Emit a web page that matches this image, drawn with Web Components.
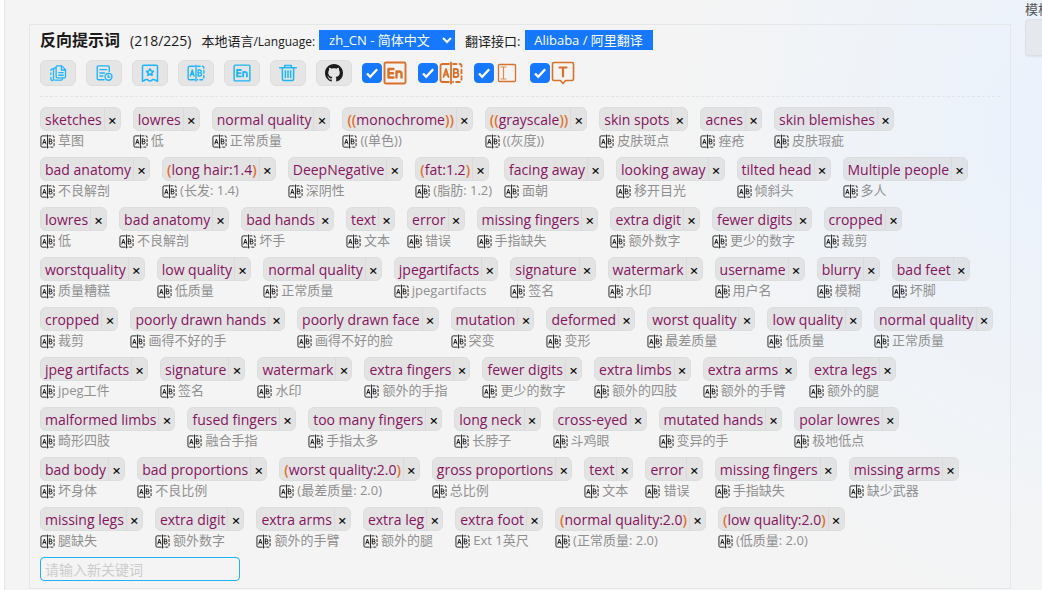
<!DOCTYPE html>
<html lang="zh-CN">
<head>
<meta charset="utf-8">
<title>反向提示词</title>
<style>
  body { margin: 0; overflow: hidden; font-family: "Open Sans", "Noto Sans CJK SC", sans-serif; color: #1a1a1a; }
</style>
</head>
<body>
<prompt-app></prompt-app>

<template id="app-template">
  <style>
    :host { display: grid; grid-template-columns: minmax(0, 1fr) 17px; column-gap: 14px; box-sizing: border-box;
      min-height: 100vh; margin-left: 4px; padding-left: 24px; border-left: 1px solid #e6e6e6;
      background: radial-gradient(ellipse 36% 85% at 100% 22%, #ebf2fc, #eff3f8 50%, #f4f4f4) #f4f4f4; }
    main { padding-top: 24px; }
    aside { overflow: hidden; white-space: nowrap; font-size: 13px; line-height: 19px; color: #555; }
    aside label { display: block; }
    aside input { box-sizing: border-box; width: 200px; height: 37px; border: 1px solid #dcdfe4; border-radius: 4px;
      background: #e5e8ed; display: block; box-shadow: 0 1px 2px #0001; }
  </style>
  <main><prompt-panel></prompt-panel></main>
  <aside><label for="model">模板</label><input id="model" type="text"></aside>
</template>

<template id="panel-template">
  <style>
    :host { display: block; box-sizing: border-box; border: 1px solid #e5e7e9; padding: 5px 10px 7px; }
    header { display: flex; align-items: center; height: 20px; white-space: nowrap; font-size: 13px; }
    h1 { margin: 0 10px 0 0; font-size: 16px; line-height: 20px; font-weight: 700; }
    .count { font-size: 14px; margin-right: 10px; }
    label { margin-right: 4px; }
    label small { font-size: 12px; }
    .pick { display: grid; position: relative; margin-right: 10px; }
    select, .api { appearance: none; box-sizing: border-box; height: 20px; border: 0; border-radius: 0; margin: 0;
      background: #1677ff; color: #fff; font: inherit; line-height: 20px; }
    select { width: 136px; padding: 0 24px 0 10px; }
    .api { width: 128px; padding: 0; text-align: center; }
    .pick svg { position: absolute; right: 3px; top: 5px; width: 10px; height: 10px; pointer-events: none; }
    tool-bar { margin-top: 10px; padding-bottom: 10px; border-bottom: 1px dashed #e3e4e6; }
    .tags { display: grid; row-gap: 8px; margin-top: 10px; }
    .group { display: flex; flex-wrap: wrap; gap: 8px 12px; }
    .new { box-sizing: border-box; display: block; width: 200px; height: 24px; margin-top: 8px; padding: 0 4px;
      border: 1px solid #1db1f5; border-radius: 4px; background: transparent; font: inherit; font-size: 14px; outline: 0; }
    .new::placeholder { color: #ccc; opacity: 1; }
  </style>
  <header>
    <h1>反向提示词</h1>
    <span class="count">(218/225)</span>
    <label for="lang">本地语言<small>/Language:</small></label>
    <span class="pick">
      <select id="lang"><option>zh_CN - 简体中文</option></select>
      <svg viewBox="0 0 10 10" fill="none" stroke="#fff" stroke-width="2"><path d="M1 3l4 4 4-4"/></svg>
    </span>
    <label for="api">翻译接口:</label>
    <button class="api" id="api" type="button">Alibaba / 阿里翻译</button>
  </header>
  <tool-bar></tool-bar>
  <div class="tags"></div>
  <input class="new" type="text" placeholder="请输入新关键词" aria-label="请输入新关键词">
</template>

<template id="bar-template">
  <style>
    :host { display: flex; align-items: center; height: 26px; gap: 10px; }
  </style>
  <tool-button icon="copy" name="复制"></tool-button>
  <tool-button icon="history" name="历史"></tool-button>
  <tool-button icon="favorite" name="收藏"></tool-button>
  <tool-button icon="translate" name="翻译"></tool-button>
  <tool-button icon="english" name="英文"></tool-button>
  <tool-button icon="trash" name="删除"></tool-button>
  <tool-button icon="github" name="GitHub"></tool-button>
  <tool-toggle icon="english" name="自动英文"></tool-toggle>
  <tool-toggle icon="translate" name="自动翻译"></tool-toggle>
  <tool-toggle icon="cursor" name="输入框"></tool-toggle>
  <tool-toggle icon="tooltip" name="提示"></tool-toggle>
</template>

<template id="button-template">
  <style>
    :host { display: block; }
    button { display: grid; place-items: center; box-sizing: border-box; width: 36px; height: 26px; padding: 0;
      border: 1px solid #dedede; border-radius: 6px; background: #e5e5e5; color: #1eb4fa; }
    svg { width: 18px; height: 18px; display: block; }
    :host([icon="github"]) { color: #1c1c1c; }
    :host([icon="github"]) button { color: inherit; }
  </style>
  <button type="button"></button>
</template>

<template id="toggle-template">
  <style>
    :host { display: block; width: 46px; color: #d9712b; }
    label { display: flex; align-items: center; gap: 2px; }
    input { appearance: none; margin: 0; flex: none; width: 20px; height: 20px; border-radius: 4px; border: 1px solid #1677ff; }
    input:checked { background: #1677ff url("data:image/svg+xml,%3Csvg xmlns='http://www.w3.org/2000/svg' viewBox='0 0 18 18' fill='none' stroke='white' stroke-width='2.4'%3E%3Cpath d='M4 9.5l3.2 3.3 7-7.6'/%3E%3C/svg%3E"); }
    svg { display: block; width: 24px; height: 24px; margin: 0 -1px; }
  </style>
  <label><input type="checkbox" checked></label>
</template>

<template id="tag-template">
  <style>
    :host { display: block; white-space: nowrap; }
    .chip { display: flex; box-sizing: border-box; width: max-content; height: 24px; border: 1px solid #dcdddf;
      border-radius: 6px; background: rgba(200, 200, 200, .38); }
    .text { padding: 0 2px 0 4px; font-size: 14px; line-height: 24px; color: #86145f; }
    .text b { font-weight: 600; color: #e0702a; }
    button { width: 16px; padding: 0; border: 0; border-left: 1px solid #dadada; background: none; color: #111;
      font: 600 15px/25px "Open Sans", sans-serif; }
    .local { display: flex; align-items: center; gap: 3px; height: 18px; font-size: 13px; line-height: 18px; color: #909090; }
    svg { width: 15px; height: 15px; color: #111; margin-top: 3px; stroke-width: 1.4; }
  </style>
  <div class="chip"><span class="text"></span><button type="button" aria-label="删除">×</button></div>
  <div class="local"><slot></slot></div>
</template>

<script>
  const stroke = (body, width = 1.5) =>
    `<svg viewBox="0 0 24 24" fill="none" stroke="currentColor" stroke-width="${width}" stroke-linecap="round" stroke-linejoin="round" aria-hidden="true">${body}</svg>`;
  const letterA = '<path d="M4.500 16L7 8l2.500 8M5.300 13.600h3.400"/>';
  const letterB = '<path d="M14.800 8v8h2.400q2.200 0 2.200-2.200 0-1.800-1.800-2 1.400-.4 1.400-1.800 0-2-2-2zM14.800 11.800h2.600"/>';
  const icons = {
    copy: stroke('<path d="M11 2.500h6l5 5V17q0 1.500-1.500 1.500H11Q9.500 18.500 9.500 17V4Q9.500 2.500 11 2.500zM16.500 2.500V8h5M13 11.500h6M13 15h6M9 5Q6 5 6 7v12.500q0 2 2 2h8q2 0 2-2M5 6.500Q2.500 6.500 2.500 8.500M2.500 12v2M2.500 18v1.500q0 2.500 2.500 2.500"/>', 1.700),
    history: stroke('<path d="M19 10V4q0-1.500-1.500-1.500H4.500Q3 2.500 3 4v15.500Q3 21 4.500 21H12M6.500 7.500h9M6.500 12h6M6.500 16h4"/><circle cx="18" cy="17" r="4.600"/><path d="M17.500 14.500V17.500H20"/>', 1.800),
    favorite: stroke('<path d="M2 23V3q0-1.500 1.500-1.500h17Q22 1.500 22 3v20l-4-2-2-.5q-2 2-4 2t-4-2L6 21z"/><path d="M12 6.500l1.500 2.800 3.100.5-2.200 2.200.5 3.100-2.900-1.400-2.900 1.400.5-3.100-2.200-2.200 3.100-.5z" fill="currentColor"/><circle cx="12" cy="11" r=".8" stroke="#e5e5e5"/>', 2),
    translate: stroke('<path d="M10 3H3.500Q1.500 3 1.500 5v14q0 2 2 2H10M12 1.500v21"/><path d="M14 3h6.500q2 0 2 2v14q0 2-2 2H14" stroke-dasharray="3.500 3"/>' + letterA + letterB, 1.800),
    english: stroke('<rect x="1.500" y="1.500" width="21" height="21" rx="1.500"/><path d="M10.500 8H5.500v8.500h5M5.500 12.200h4.500M13.500 16.500v-6M13.500 12.800Q14 10.500 16 10.500q2.500 0 2.500 2.500v3.500" stroke-width="2.400"/>', 1.900),
    trash: stroke('<path d="M1 5h22M7.500 5V2h9v3M4.500 5v15q0 2 2 2h11q2 0 2-2V5M8.500 9v9M12 9v9M15.500 9v9"/>', 2),
    github: '<svg viewBox="0 0 16 16" fill="currentColor" aria-hidden="true"><path d="M8 0C3.580 0 0 3.580 0 8c0 3.540 2.290 6.530 5.470 7.590.4.070.55-.17.55-.38 0-.19-.01-.82-.01-1.490-2.010.37-2.530-.49-2.690-.94-.09-.23-.48-.94-.82-1.130-.28-.15-.68-.52-.01-.53.63-.01 1.080.58 1.230.82.72 1.210 1.870.87 2.330.66.07-.52.28-.87.51-1.070-1.780-.2-3.640-.89-3.640-3.950 0-.87.31-1.590.82-2.150-.08-.2-.36-1.020.08-2.120 0 0 .67-.21 2.200.82.64-.18 1.320-.27 2-.27s1.360.09 2 .27c1.530-1.040 2.200-.82 2.200-.82.44 1.100.16 1.920.08 2.120.51.56.82 1.270.82 2.150 0 3.070-1.870 3.750-3.650 3.950.29.25.54.73.54 1.480 0 1.070-.01 1.930-.01 2.200 0 .21.15.46.55.38A8.010 8.010 0 0 0 16 8c0-4.420-3.580-8-8-8z"/></svg>',
    cursor: stroke('<rect x="3.500" y="3.500" width="17" height="17" rx="1"/><g stroke-width="1.200" opacity=".8"><path d="M6 6h5M6 18h5M8.500 6v12"/></g>', 1.300),
    tooltip: stroke('<path d="M3 1.500h18q1.500 0 1.500 1.500v15q0 1.500-1.500 1.500h-6.500L12 22.500l-2.500-3H3Q1.500 19.500 1.500 18V3Q1.500 1.500 3 1.500z"/><path d="M8.500 6.500h7M12 6.500v9" stroke-width="2.200"/>', 1.600)
  };

  class TemplateElement extends HTMLElement {
    constructor() {
      super();
      this.attachShadow({ mode: "open" }).append(document.getElementById(this.constructor.template).content.cloneNode(true));
    }
    find(selector) { return this.shadowRoot.querySelector(selector); }
  }

  class ToolButton extends TemplateElement {
    static template = "button-template";
    connectedCallback() {
      const button = this.find("button");
      button.innerHTML = icons[this.getAttribute("icon")];
      button.setAttribute("aria-label", this.getAttribute("name"));
    }
  }

  class ToolToggle extends TemplateElement {
    static template = "toggle-template";
    connectedCallback() {
      this.find("label").insertAdjacentHTML("beforeend", icons[this.getAttribute("icon")]);
      this.find("input").setAttribute("aria-label", this.getAttribute("name"));
    }
  }

  class PromptTag extends TemplateElement {
    static template = "tag-template";
    connectedCallback() {
      this.find(".text").innerHTML = this.getAttribute("keyword").replace(/[()]+/g, "<b>$&</b>");
      this.find(".local").insertAdjacentHTML("afterbegin", icons.translate);
    }
  }

  class ToolBar extends TemplateElement { static template = "bar-template"; }

  // One "keyword|translation" per line; a blank line starts a new group.
  const groups = `sketches|草图
lowres|低
normal quality|正常质量
((monochrome))|((单色))
((grayscale))|((灰度))
skin spots|皮肤斑点
acnes|痤疮
skin blemishes|皮肤瑕疵

bad anatomy|不良解剖
(long hair:1.4)|(长发: 1.4)
DeepNegative|深阴性
(fat:1.2)|(脂肪: 1.2)
facing away|面朝
looking away|移开目光
tilted head|倾斜头
Multiple people|多人

lowres|低
bad anatomy|不良解剖
bad hands|坏手
text|文本
error|错误
missing fingers|手指缺失
extra digit|额外数字
fewer digits|更少的数字
cropped|裁剪

worstquality|质量糟糕
low quality|低质量
normal quality|正常质量
jpegartifacts|jpegartifacts
signature|签名
watermark|水印
username|用户名
blurry|模糊
bad feet|坏脚

cropped|裁剪
poorly drawn hands|画得不好的手
poorly drawn face|画得不好的脸
mutation|突变
deformed|变形
worst quality|最差质量
low quality|低质量
normal quality|正常质量

jpeg artifacts|jpeg工件
signature|签名
watermark|水印
extra fingers|额外的手指
fewer digits|更少的数字
extra limbs|额外的四肢
extra arms|额外的手臂
extra legs|额外的腿

malformed limbs|畸形四肢
fused fingers|融合手指
too many fingers|手指太多
long neck|长脖子
cross-eyed|斗鸡眼
mutated hands|变异的手
polar lowres|极地低点

bad body|坏身体
bad proportions|不良比例
(worst quality:2.0)|(最差质量: 2.0)
gross proportions|总比例
text|文本
error|错误
missing fingers|手指缺失
missing arms|缺少武器

missing legs|腿缺失
extra digit|额外数字
extra arms|额外的手臂
extra leg|额外的腿
extra foot|Ext 1英尺
(normal quality:2.0)|(正常质量: 2.0)
(low quality:2.0)|(低质量: 2.0)`.split("\n\n").map(group => group.split("\n").map(line => line.split("|")));

  class PromptPanel extends TemplateElement {
    static template = "panel-template";
    connectedCallback() {
      this.find(".tags").append(...groups.map(keywords => {
        const group = document.createElement("div");
        group.className = "group";
        group.append(...keywords.map(([keyword, local]) => {
          const tag = document.createElement("prompt-tag");
          tag.setAttribute("keyword", keyword);
          tag.textContent = local;
          return tag;
        }));
        return group;
      }));
    }
  }

  class PromptApp extends TemplateElement { static template = "app-template"; }

  customElements.define("tool-button", ToolButton);
  customElements.define("tool-toggle", ToolToggle);
  customElements.define("tool-bar", ToolBar);
  customElements.define("prompt-tag", PromptTag);
  customElements.define("prompt-panel", PromptPanel);
  customElements.define("prompt-app", PromptApp);
</script>
</body>
</html>
